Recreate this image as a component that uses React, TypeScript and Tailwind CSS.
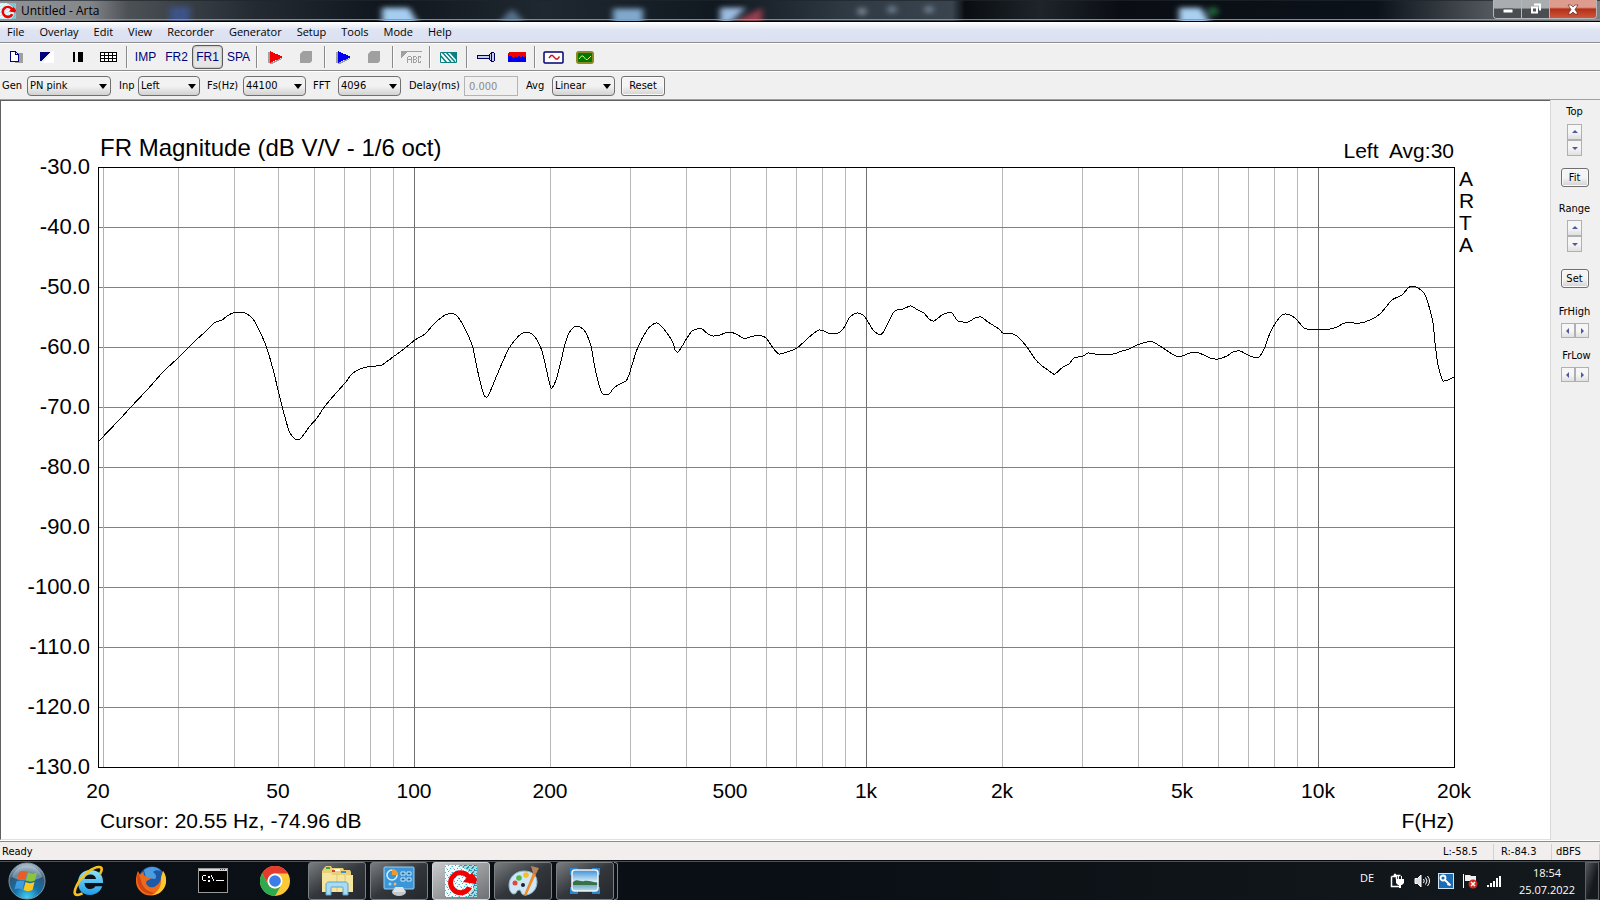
import type { ReactNode } from 'react';
import clsx from 'clsx';

const MENU = ['File', 'Overlay', 'Edit', 'View', 'Recorder', 'Generator', 'Setup', 'Tools', 'Mode', 'Help'];

// Plot frame in chart units: 20 Hz - 20 kHz, -30 dB - -130 dB
const LEFT = 98;
const RIGHT = 1454;
const TOP = 167;
const BOTTOM = 767;

const freqToX = (f: number) => Math.round(LEFT + (Math.log10(f / 20) / 3) * (RIGHT - LEFT));
const dbToY = (db: number) => Math.round(TOP + ((-30 - db) / 100) * (BOTTOM - TOP));

const DB_TICKS = [-30, -40, -50, -60, -70, -80, -90, -100, -110, -120, -130];
const MINOR_FREQS = [30, 40, 50, 60, 70, 80, 90, 200, 300, 400, 500, 600, 700, 800, 900, 2000, 3000, 4000, 5000, 6000, 7000, 8000, 9000];
const MAJOR_FREQS = [100, 1000, 10000];
const FREQ_LABELS: [number, string][] = [
    [20, '20'], [50, '50'], [100, '100'], [200, '200'], [500, '500'],
    [1000, '1k'], [2000, '2k'], [5000, '5k'], [10000, '10k'], [20000, '20k'],
];

const CURVE = `98,442 120,419 130,408 147,390 163,372 178,358 195,341 205,332 214,323 222,320 227,316 233,313 241,312 245,313
250,316 255,322 260,332 265,343 269,355 274,373 278,390 283,410 289,431 293,437 297,440 301,438 310,426 317,418 325,406
337,392 345,383 352,374 360,369 367,367 376,366 382,365 393,357 405,348 415,340 425,334 433,325 442,317 448,314 454,314
458,317 463,325 468,335 473,348 477,368 481,385 484,395 487,397 490,392 497,375 508,350 515,340 521,334 527,332 532,334
537,340 542,351 547,372 551,388 556,380 562,357 564,348 568,335 573,328 577,326 583,329 587,335 591,346 594,363 597,377
600,388 603,394 609,394 613,389 618,385 626,381 629,375 632,365 638,347 647,330 652,325 656,323 659,324 667,333 673,343
675,350 678,352 681,348 687,338 692,331 697,329 702,329 708,334 713,336 720,335 725,333 730,332 736,334 743,338 747,338
754,336 762,336 767,339 773,348 779,354 787,352 797,348 807,339 814,333 819,330 824,331 828,333 833,334 840,332 845,326
849,318 854,314 858,313 863,315 867,320 873,330 880,335 884,331 888,323 893,313 897,310 903,309 910,306 913,307 918,310
924,313 929,319 934,321 942,315 947,313 952,313 958,321 968,322 975,318 981,317 988,322 999,329 1003,333 1013,334 1018,337
1027,347 1035,359 1042,366 1048,370 1052,373 1055,374 1063,367 1069,364 1074,358 1083,356 1088,353 1095,354 1113,354
1122,351 1129,349 1137,345 1147,342 1153,342 1163,348 1172,354 1179,357 1190,353 1199,353 1210,358 1218,359 1227,356
1233,352 1240,351 1248,355 1256,358 1260,356 1265,347 1268,338 1273,327 1280,317 1285,314 1292,316 1297,320 1302,326
1307,329 1330,329 1337,327 1345,323 1360,323 1370,320 1380,314 1392,300 1402,295 1408,288 1413,286 1418,288 1424,293
1428,303 1433,323 1435,343 1438,365 1442,379 1443,381 1448,380 1454,377`;

// Catmull-Rom through the measured points
function smoothPath(points: string) {
    const pts = points.split(/\s+/).map((p) => p.split(',').map(Number));
    let d = `M${pts[0][0]} ${pts[0][1]}`;
    for (let i = 0; i < pts.length - 1; i++) {
        const p0 = pts[i - 1] ?? pts[i];
        const p1 = pts[i];
        const p2 = pts[i + 1];
        const p3 = pts[i + 2] ?? p2;
        const c1 = [p1[0] + (p2[0] - p0[0]) / 8, p1[1] + (p2[1] - p0[1]) / 8];
        const c2 = [p2[0] - (p3[0] - p1[0]) / 8, p2[1] - (p3[1] - p1[1]) / 8];
        d += `C${c1[0]} ${c1[1]} ${c2[0]} ${c2[1]} ${p2[0]} ${p2[1]}`;
    }
    return d;
}

function ArtaIcon({ className }: { className?: string }) {
    return (
        <svg viewBox="0 0 32 32" className={className} aria-hidden="true">
            <defs>
                <pattern id="artaNoise" width="7" height="6" patternUnits="userSpaceOnUse">
                    <path d="M0 1h1v1H0zM3 0h1v1H3zM5 3h1v1H5zM2 4h1v1H2z" fill="#2fb6cc" />
                    <path d="M6 1h1v1H6zM1 3h1v1H1zM4 5h1v1H4z" fill="#8fdbe6" />
                </pattern>
                <pattern id="artaDense" width="5" height="5" patternUnits="userSpaceOnUse">
                    <path d="M0 0h2v1H0zM3 1h1v2H3zM1 3h2v1H1zM4 4h1v1H4z" fill="#1fa5bb" />
                    <path d="M2 2h1v1H2zM4 0h1v1H4z" fill="#4b6c78" />
                </pattern>
            </defs>
            <rect width="32" height="32" fill="#f4fbfc" />
            <rect width="32" height="32" fill="url(#artaNoise)" />
            <path d="M14 0h18v32H22l6-8V10L20 4z" fill="#a5dce4" />
            <path d="M14 0h18v32H22l6-8V10L20 4z" fill="url(#artaDense)" />
            <path d="M25 9.500A12.500 12.500 0 1 0 27 23l-5-1.500A7.500 7.500 0 1 1 21.500 13L18 17l13 2 1-5-5-6z" fill="#f00000" />
        </svg>
    );
}

function TitleBar() {
    return (
        <header className="relative flex h-[22px] items-center justify-between overflow-hidden border-b border-black bg-[#0c1118]">
            {/* blurred desktop showing through the glass */}
            <svg className="absolute inset-0 h-full w-full" viewBox="0 0 1600 22" preserveAspectRatio="none" aria-hidden="true">
                <defs>
                    <linearGradient id="glass">
                        <stop offset="0" stopColor="#909396" />
                        <stop offset="0.055" stopColor="#85888b" />
                        <stop offset="0.08" stopColor="#4c5156" />
                        <stop offset="0.16" stopColor="#232a32" />
                        <stop offset="0.24" stopColor="#10161d" />
                        <stop offset="0.34" stopColor="#1f2830" />
                        <stop offset="0.45" stopColor="#101820" />
                        <stop offset="0.53" stopColor="#303a44" />
                        <stop offset="0.595" stopColor="#3a444e" />
                        <stop offset="0.603" stopColor="#0a0e12" />
                        <stop offset="0.65" stopColor="#1e242a" />
                        <stop offset="0.7" stopColor="#0a0e14" />
                        <stop offset="0.86" stopColor="#0c121a" />
                        <stop offset="0.93" stopColor="#50565b" />
                        <stop offset="1" stopColor="#7d8184" />
                    </linearGradient>
                    <filter id="soft" x="-50%" y="-50%" width="200%" height="200%"><feGaussianBlur stdDeviation="3" /></filter>
                </defs>
                <rect width="1600" height="22" fill="url(#glass)" />
                <g filter="url(#soft)">
                    <rect x="170" y="7" width="20" height="20" fill="#3c5287" />
                    <path d="M382 8h27l10 18h-37z" fill="#a4cdf0" />
                    <path d="M512 9l14 16h-28z" fill="#56718a" />
                    <rect x="613" y="9" width="30" height="18" fill="#7fa8cc" />
                    <path d="M720 8h26l-18 18h-8z" fill="#9dbbe0" />
                    <path d="M736 22l26-14v18h-26z" fill="#99404f" />
                    <circle cx="862" cy="12" r="4" fill="#87909b" />
                    <circle cx="892" cy="10" r="4" fill="#76889a" />
                    <circle cx="929" cy="10" r="4" fill="#76889a" />
                    <path d="M1179 8h22l10 18h-32z" fill="#a9d0f2" />
                    <circle cx="1213" cy="12" r="5" fill="#22693a" />
                </g>
                <rect width="1600" height="1" fill="#20262c" opacity="0.7" />
                <rect y="20" width="1600" height="1" fill="#8f9599" />
            </svg>
            <div className="relative flex items-center gap-[5px]">
                <ArtaIcon className="size-4" />
                <h1 className="text-xs leading-4 text-black">Untitled - Arta</h1>
            </div>
            <div className="relative mr-[3px] flex h-[19px] self-start overflow-hidden rounded-b border border-t-0 border-[#b5b8ba]">
                <button aria-label="Minimize" className="flex w-7 items-center justify-center border-r border-[#b5b8ba] bg-linear-to-b from-[#aaadaf] from-45% to-[#4a4e52] to-50%">
                    <svg width="12" height="12" viewBox="0 0 12 12"><path d="M1 6h10v4H1z" fill="#fff" stroke="#484c50" /></svg>
                </button>
                <button aria-label="Restore" className="flex w-7 items-center justify-center border-r border-[#b5b8ba] bg-linear-to-b from-[#aaadaf] from-45% to-[#4a4e52] to-50%">
                    <svg width="13" height="12" viewBox="0 0 13 12"><path d="M5 1.500h6v6" fill="none" stroke="#fff" strokeWidth="2" /><path d="M3 4.500h5v5H3z" fill="#555" stroke="#fff" strokeWidth="2" /></svg>
                </button>
                <button aria-label="Close" className="flex w-[46px] items-center justify-center bg-linear-to-b from-[#dd9c8e] from-40% via-[#b32f17] via-50% to-[#d0553a]">
                    <svg width="12" height="11" viewBox="0 0 12 11"><path d="M1 1h3l2 2 2-2h3L8 5.500 11 10H8L6 8l-2 2H1l3-4.500z" fill="#fff" stroke="#5c2c26" strokeWidth="0.700" /></svg>
                </button>
            </div>
        </header>
    );
}

function ToolButton({ label, active, children }: { label: string; active?: boolean; children: ReactNode }) {
    return (
        <button
            aria-label={label}
            className={clsx(
                'flex h-6 w-[31px] items-center justify-center font-["Liberation_Sans",sans-serif] text-xs text-[#000078]',
                active && 'rounded-sm border border-[#5a5a5a] bg-[#e6e6e6] shadow-[inset_0_0_2px_#888]',
            )}
        >
            {children}
        </button>
    );
}

function ToolSep() {
    return <div className="mx-[2px] h-[22px] w-[2px] border-l border-[#8a8a8a] bg-[#fafafa]" />;
}

function PlayIcon({ className }: { className: string }) {
    return (
        <svg width="15" height="13" viewBox="0 0 15 13" className={className} shapeRendering="crispEdges">
            <path d="M0 1h2v11H0z" fill="#a0a0a0" />
            <path d="M2 0l13 6-13 6z" fill="currentColor" />
            <path d="M2 12l12-5v1L4 13H2z" fill="#a0a0a0" />
        </svg>
    );
}

function StopIcon() {
    return (
        <svg width="13" height="12" viewBox="0 0 13 12"><path d="M3 0h9v10l-2 2H0V3z" fill="#a0a0a0" /></svg>
    );
}

function ToolBar() {
    return (
        <div role="toolbar" aria-label="Main" className="flex h-7 items-center border-t border-[#8e8e8e] bg-[#f0f0f0] pt-px shadow-[inset_0_1px_#fff]">
            <ToolButton label="New">
                <svg width="16" height="14" viewBox="0 0 16 14" className="ml-[3px]" shapeRendering="crispEdges">
                    <path d="M6 3h8v10H6z" fill="#a0a0a0" />
                    <path d="M1.500 1.500h5l3 3v7h-8z" fill="#fff" stroke="#000078" />
                    <path d="M6.500 1.500v3h3" fill="none" stroke="#000078" />
                </svg>
            </ToolButton>
            <ToolButton label="Invert colors">
                <svg width="14" height="12" viewBox="0 0 14 12" shapeRendering="crispEdges">
                    <path d="M12 0h2v12H3z" fill="#fff" />
                    <path d="M0 1h10L1 10H0z" fill="#000078" />
                </svg>
            </ToolButton>
            <ToolButton label="Line width">
                <svg width="10" height="10" viewBox="0 0 10 10" shapeRendering="crispEdges"><path d="M0 0h2v10H0zM5 0h5v10H5z" fill="#000" /></svg>
            </ToolButton>
            <ToolButton label="Grid">
                <svg width="17" height="10" viewBox="0 0 17 10" shapeRendering="crispEdges">
                    <path d="M0 0h17v10H0z" fill="#fff" />
                    <path d="M0.500 0.500h16v9h-16zM0 3.500h17M0 6.500h17M4.500 0v10M8.500 0v10M12.500 0v10" fill="none" stroke="#000" />
                </svg>
            </ToolButton>
            <ToolSep />
            <ToolButton label="IMP">IMP</ToolButton>
            <ToolButton label="FR2">FR2</ToolButton>
            <ToolButton label="FR1" active>FR1</ToolButton>
            <ToolButton label="SPA">SPA</ToolButton>
            <ToolSep />
            <ToolButton label="Record"><PlayIcon className="text-[#f00000]" /></ToolButton>
            <ToolButton label="Stop recording"><StopIcon /></ToolButton>
            <ToolSep />
            <ToolButton label="Generate"><PlayIcon className="text-[#0000f0]" /></ToolButton>
            <ToolButton label="Stop generator"><StopIcon /></ToolButton>
            <ToolSep />
            <ToolButton label="Overlay text">
                <svg width="21" height="12" viewBox="0 0 21 12" fill="none" stroke="#a0a0a0" shapeRendering="crispEdges">
                    <path d="M0 0h7L0 7z" fill="#a0a0a0" stroke="none" />
                    <path d="M0 0.500h21M6.500 12V6.500l1-1h2l1 1V12M6.500 8.500h4M12.500 5.500h2l1 1v1l-1 1h-2zM12.500 8.500v3h2l1-1v-1l-1-1M20 6.500l-1-1h-1l-1 1v4l1 1h1l1-1" />
                </svg>
            </ToolButton>
            <ToolSep />
            <ToolButton label="Smoothing">
                <svg width="17" height="11" viewBox="0 0 17 11" fill="none" stroke="#0a8080">
                    <path d="M0.500 0.500h16v10h-16z" fill="#fff" />
                    <path d="M0 3l7 8M2 0l9 10M6 0l9 10" strokeWidth="1.500" />
                    <path d="M9 0h8v9z" fill="#0a8080" stroke="none" />
                </svg>
            </ToolButton>
            <ToolSep />
            <ToolButton label="Microphone">
                <svg width="18" height="10" viewBox="0 0 18 10" stroke="#000060" fill="#c8cce8" shapeRendering="crispEdges">
                    <path d="M0.500 3.500h12v3h-12z" />
                    <path d="M12.500 2.500l1-1h1v7h-1l-1-1zM14.500 0.500h2l1 1v7l-1 1h-2z" />
                </svg>
            </ToolButton>
            <ToolButton label="Spectrum colors">
                <svg width="18" height="10" viewBox="0 0 18 10" shapeRendering="crispEdges">
                    <path d="M1 0h16l1 1v7H0V1z" fill="#f00000" />
                    <path d="M0 3l2 2 1-2 2 3 2-2 2 2 2-3 2 3 1-2 2 1 2-2v7H0z" fill="#0000f0" />
                </svg>
            </ToolButton>
            <ToolSep />
            <ToolButton label="Signal generator setup">
                <svg width="21" height="13" viewBox="0 0 21 13" fill="none">
                    <rect x="1" y="1" width="19" height="11" rx="1" fill="#fff" stroke="#000070" strokeWidth="1.500" />
                    <path d="M6 7l2-2.500h1.500L13 8h1.500l2-2.500" stroke="#d01010" strokeWidth="1.300" />
                </svg>
            </ToolButton>
            <ToolButton label="Audio devices">
                <svg width="18" height="13" viewBox="0 0 18 13" fill="none">
                    <rect x="1" y="1" width="16" height="11" rx="2" fill="#007800" stroke="#8a8a20" strokeWidth="2" />
                    <path d="M3 8l2.500-3H7l3 3.500h1.500L15 5" stroke="#f0f060" />
                </svg>
            </ToolButton>
        </div>
    );
}

interface ComboProps {
    id: string;
    label: string;
    options: string[];
    labelClass: string;
    width: string;
}

function Combo({ id, label, options, labelClass, width }: ComboProps) {
    return (
        <>
            <label htmlFor={id} className={labelClass}>{label}</label>
            <div className={clsx('relative', width)}>
                <select id={id} className="h-5 w-full appearance-none rounded-sm border border-[#707070] bg-linear-to-b from-[#f2f2f2] from-50% to-[#d2d2d2] pl-[2px] text-[11px] leading-4">
                    {options.map((o) => <option key={o}>{o}</option>)}
                </select>
                <svg width="8" height="5" viewBox="0 0 8 5" className="pointer-events-none absolute top-2 right-1"><path d="M0 0h8L4 5z" fill="#000" /></svg>
            </div>
        </>
    );
}

const pushButton = 'rounded-[3px] border border-[#707070] bg-linear-to-b from-[#f4f4f4] from-50% to-[#d2d2d2] text-[11px] leading-4 shadow-[inset_0_0_0_1px_#fafafa]';

function SettingsBar() {
    return (
        <div className="flex h-[29px] items-center border-t border-[#8e8e8e] bg-[#f0f0f0] pt-[2px] pl-[2px] text-[11px] shadow-[inset_0_1px_#fff]">
            <Combo id="gen" label="Gen" options={['PN pink', 'PN white', 'Periodic']} labelClass="w-[25px]" width="w-[84px]" />
            <Combo id="inp" label="Inp" options={['Left', 'Right']} labelClass="ml-2 w-[19px]" width="w-[62px]" />
            <Combo id="fs" label="Fs(Hz)" options={['44100', '48000', '96000']} labelClass="ml-[7px] w-9" width="w-[63px]" />
            <Combo id="fft" label="FFT" options={['4096', '8192', '16384']} labelClass="ml-[7px] w-[25px]" width="w-[63px]" />
            <label htmlFor="delay" className="ml-2 w-[55px]">Delay(ms)</label>
            <input id="delay" disabled defaultValue="0.000" className="h-5 w-[54px] border border-[#b4b4b4] bg-[#f0f0f0] px-1 text-[11px] text-[#8a8a8a]" />
            <Combo id="avg" label="Avg" options={['Linear', 'Exp', 'None']} labelClass="ml-2 w-[26px]" width="w-[63px]" />
            <button className={clsx(pushButton, 'ml-[6px] h-5 w-11')}>Reset</button>
        </div>
    );
}

function Chart() {
    return (
        <svg viewBox="1 101 1549 738" className="block h-auto w-full bg-white font-['Liberation_Sans',Arial,sans-serif]" role="img" aria-label="Frequency response">
            <g shapeRendering="crispEdges" fill="none">
                {MINOR_FREQS.map((f) => (
                    <path key={f} d={`M${freqToX(f) + 0.5} ${TOP}V${BOTTOM}`} stroke="#b8b8b8" />
                ))}
                {DB_TICKS.map((db) => (
                    <path key={db} d={`M${LEFT} ${dbToY(db) + 0.5}H${RIGHT}`} stroke="#808080" />
                ))}
                {MAJOR_FREQS.map((f) => (
                    <path key={f} d={`M${freqToX(f) + 0.5} ${TOP}V${BOTTOM}`} stroke="#707070" />
                ))}
                <path d={`M103.500 ${TOP}V${BOTTOM}`} stroke="#c4c41c" />
                <path d={`M${LEFT + 0.5} ${TOP + 0.5}H${RIGHT + 0.5}V${BOTTOM + 0.5}H${LEFT + 0.5}z`} stroke="#000" />
                <path d={smoothPath(CURVE)} stroke="#000" />
            </g>
            <g fontSize="21" fill="#000">
                <text x="100" y="156" fontSize="24">FR Magnitude (dB V/V - 1/6 oct)</text>
                <text x="1454" y="158" textAnchor="end">{'Left\u00a0 Avg:30'}</text>
                {DB_TICKS.map((db) => (
                    <text key={db} x="90" y={dbToY(db) + 7} fontSize="22" textAnchor="end">{db.toFixed(1)}</text>
                ))}
                {FREQ_LABELS.map(([f, text]) => (
                    <text key={f} x={freqToX(f)} y="798" textAnchor="middle">{text}</text>
                ))}
                {['A', 'R', 'T', 'A'].map((c, i) => (
                    <text key={i} x="1459" y={186 + i * 22}>{c}</text>
                ))}
                <text x="100" y="828">Cursor: 20.55 Hz, -74.96 dB</text>
                <text x="1454" y="828" textAnchor="end">F(Hz)</text>
            </g>
        </svg>
    );
}

const ARROWS = {
    up: 'M0 4h6L3 1z',
    down: 'M0 2h6L3 5z',
    left: 'M4 0v6L1 3z',
    right: 'M2 0v6l3-3z',
};

function Spinner({ label, dirs }: { label: string; dirs: (keyof typeof ARROWS)[] }) {
    return (
        <div className={clsx('flex', dirs[0] === 'up' ? 'flex-col' : 'flex-row')}>
            {dirs.map((dir) => (
                <button
                    key={dir}
                    aria-label={`${label} ${dir}`}
                    className={clsx(
                        'flex items-center justify-center border border-[#b0b0b0] bg-linear-to-b from-[#f6f6f6] from-50% to-[#e0e0e0]',
                        dirs[0] === 'up' ? 'h-4 w-[15px]' : 'h-[15px] w-[14px]',
                    )}
                >
                    <svg width="6" height="6" viewBox="0 0 6 6"><path d={ARROWS[dir]} fill="#5258a0" /></svg>
                </button>
            ))}
        </div>
    );
}

function SidePanel() {
    return (
        <aside className="flex w-[50px] shrink-0 flex-col items-center border-l border-[#d8d8d8] bg-[#f0f0f0] pt-1 pr-[2px] text-[11px] leading-4">
            <span>Top</span>
            <div className="mt-1"><Spinner label="Top" dirs={['up', 'down']} /></div>
            <button className={clsx(pushButton, 'mt-3 h-[19px] w-7')}>Fit</button>
            <span className="mt-[14px]">Range</span>
            <div className="mt-[3px]"><Spinner label="Range" dirs={['up', 'down']} /></div>
            <button className={clsx(pushButton, 'mt-[17px] h-[19px] w-7')}>Set</button>
            <span className="mt-4">FrHigh</span>
            <div className="mt-[3px]"><Spinner label="FrHigh" dirs={['left', 'right']} /></div>
            <span className="mt-[10px] pl-1">FrLow</span>
            <div className="mt-[3px]"><Spinner label="FrLow" dirs={['left', 'right']} /></div>
        </aside>
    );
}

function StatusBar() {
    return (
        <div className="flex h-5 items-center border-t border-white bg-[#f1eeed] pt-[2px] pl-[2px] text-[11px] leading-4 shadow-[inset_0_1px_#8a8a8a]">
            <span className="flex-1">Ready</span>
            <span className="w-[51px] border-r border-[#d4d0ce]">L:-58.5</span>
            <span className="w-[58px] border-r border-[#d4d0ce] pl-[7px]">R:-84.3</span>
            <span className="w-12 border-r border-[#d4d0ce] pl-1">dBFS</span>
        </div>
    );
}

function StartOrb() {
    return (
        <svg width="38" height="38" viewBox="0 0 38 38">
            <defs>
                <radialGradient id="orb" cx="0.5" cy="0.95" r="0.9">
                    <stop offset="0" stopColor="#3fd0f4" />
                    <stop offset="0.4" stopColor="#1670a8" />
                    <stop offset="0.75" stopColor="#2d5878" />
                    <stop offset="1" stopColor="#9fb4c2" />
                </radialGradient>
            </defs>
            <circle cx="19" cy="19" r="18" fill="url(#orb)" stroke="#7d97a6" />
            <path d="M4 15a15.500 15.500 0 0 1 30 0c-9 5-20 5-30 0z" fill="#fff" opacity="0.3" />
            <path d="M11 10c3-1.500 5-1.500 8 0l-2 8c-3-1.500-5-1.500-8 0z" fill="#ec5b25" />
            <path d="M20 10.500c3 1.500 6 1.500 9 0l-2 8c-3 1.500-6 1.500-9 0z" fill="#8cc43c" />
            <path d="M8.500 19.500c3-1.500 5-1.500 8 0l-2 8c-3-1.500-5-1.500-8 0z" fill="#3d9ce0" />
            <path d="M17.500 20c3 1.500 6 1.500 9 0l-2 8c-3 1.500-6 1.500-9 0z" fill="#fcc81e" />
        </svg>
    );
}

function ExplorerE() {
    return (
        <svg width="32" height="32" viewBox="0 0 32 32">
            <defs>
                <linearGradient id="ie" x2="0" y2="1"><stop stopColor="#8fe2fc" /><stop offset="1" stopColor="#1e9ce4" /></linearGradient>
            </defs>
            <path d="M30 18H11.500c.3 4 2.500 6 5.800 6 2.400 0 4-1 5-2.700h7C27.600 26.500 23 30 17 30 9.500 30 5 25 5 17.500S10 5 17.500 5C25.500 5 30.500 10 30 18zM23 14c-.4-3-2.400-4.500-5.500-4.500S12.200 11 11.500 14z" fill="url(#ie)" />
            <path d="M27 9c2.500-4.500 2.500-7-1-7C20 2 9 10 4 20c-3 6-3.500 10 .5 10 1.500 0 3-.6 5-1.600" fill="none" stroke="#f6c21c" strokeWidth="2.600" />
        </svg>
    );
}

function FirefoxIcon() {
    return (
        <svg width="32" height="32" viewBox="0 0 32 32">
            <circle cx="17" cy="15" r="13.500" fill="#1c5aa8" />
            <path d="M9 5c5-4 13-4 17 1-3-1-6-1-8 1 3 2 4 5 2 7l-9-1z" fill="#4c9ce0" />
            <path d="M28 6c3 4 4 12 1 17-5 9-18 10-24 3C0 21 0 13 3 6l2 4c1-2 3-3 4-3-1 2 0 4 2 4.500l5 1.500c-1 2-4 2-5 4 0 4 4 6 8 5 4-2 7-5 7-10z" fill="#ec6a18" />
            <path d="M28 6c4 5 4 13 1 17-3 5-8 7-12 7 6-3 10-9 9-17z" fill="#fcc82c" />
            <path d="M3 8c-2 7 0 14 5 18 4 3 8 4 12 2-8-1-13-6-14-13z" fill="#d24414" />
        </svg>
    );
}

function CmdIcon() {
    return (
        <svg width="30" height="26" viewBox="0 0 30 26" shapeRendering="crispEdges" fill="none">
            <path d="M0.500 0.500h29v24h-29z" fill="#000" stroke="#9a9a9a" />
            <path d="M1 1h28v2H1z" fill="#d8d8d8" />
            <path d="M22 1h1v1h-1zM24 1h1v1h-1zM26 1h1v1h-1z" fill="#444" />
            <path d="M8 7.500H5.500l-1 1v3l1 1H8M10 8h1v1h-1zM10 12h1v1h-1zM13 7l3 6M18 12.500h8" stroke="#fff" />
        </svg>
    );
}

function ChromeIcon() {
    return (
        <svg width="30" height="30" viewBox="0 0 30 30">
            <circle cx="15" cy="15" r="15" fill="#fcc934" />
            <path d="M2 7.500A15 15 0 0 1 28 7.500H15a7.500 7.500 0 0 0-6.500 11.200z" fill="#e33b2e" />
            <path d="M2 7.500a15 15 0 0 0 13 22.500l6.500-11.300a7.500 7.500 0 0 1-13 0z" fill="#2da94f" />
            <circle cx="15" cy="15" r="7.500" fill="#fff" />
            <circle cx="15" cy="15" r="5.800" fill="#3b7de8" />
        </svg>
    );
}

function FolderIcon() {
    return (
        <svg width="32" height="32" viewBox="0 0 32 32">
            <path d="M3 3l2-2h5l1 2h11l1 2h6l1 2v20H1V6z" fill="#e8cf78" />
            <path d="M5 2h4v2H5z" fill="#2fa84c" />
            <path d="M13 4h6v2h-6z" fill="#fff" />
            <path d="M20 6h5v2h-5z" fill="#3a8fd8" />
            <path d="M11 5h3v2h-3z" fill="#d84030" />
            <path d="M1 8h9l1 2h21v17H1z" fill="#f6e59c" />
            <path d="M16 9v18M24 10v17" stroke="#dcc67c" fill="none" />
            <path d="M5 30V20c0-2 1-3 3-3h16c2 0 3 1 3 3v10h-5v-7c0-1 0-1-1-1H11c-1 0-1 0-1 1v7z" fill="#a9dcf4" stroke="#5ca4cc" />
        </svg>
    );
}

function ControlPanelIcon() {
    return (
        <svg width="32" height="32" viewBox="0 0 32 32" fill="none">
            <rect x="1" y="2" width="30" height="22" rx="1" fill="#3a96d8" stroke="#9ad0f0" />
            <circle cx="9" cy="10" r="5" stroke="#d4effc" strokeWidth="1.500" />
            <path d="M9 10V4a6 6 0 0 1 6 6z" fill="#f09828" />
            <path d="M18 7h4v3h-4zM24 7h4v3h-4zM18 13h4v3h-4zM24 13h4v3h-4z" fill="#1c68a8" stroke="#c8ecfc" />
            <circle cx="7" cy="19" r="1.500" fill="#9adcf8" />
            <circle cx="12" cy="19" r="1.500" fill="#f8b060" />
            <ellipse cx="16" cy="27" rx="7" ry="4" fill="#c4c8cc" />
            <path d="M12 22h8l2 5H10z" fill="#dfe2e4" />
        </svg>
    );
}

function PaintIcon() {
    return (
        <svg width="32" height="32" viewBox="0 0 32 32">
            <path d="M2 20C2 12 9 6 17 6s13 4 13 11-5 13-12 13c-5 0-3-5-6-5s-2 4-5 4-5-4-5-9z" fill="#cfe6f6" stroke="#8bb4d0" />
            <circle cx="8" cy="18" r="2.500" fill="#e04838" />
            <circle cx="12" cy="13" r="2.800" fill="#52b848" />
            <circle cx="19" cy="10" r="2.800" fill="#f4c028" />
            <circle cx="16" cy="20" r="2" fill="#16242e" />
            <path d="M26 8l3 1-10 22-2-1z" fill="#f08c28" />
            <path d="M24 1l8 2-3 6-3-1z" fill="#b88458" />
        </svg>
    );
}

function PhotoIcon() {
    return (
        <svg width="32" height="28" viewBox="0 0 32 28">
            <defs>
                <linearGradient id="sky" x2="0" y2="1"><stop stopColor="#3d8fd4" /><stop offset="0.55" stopColor="#d4ecf8" /><stop offset="0.6" stopColor="#5c9cb8" /><stop offset="1" stopColor="#b8dcec" /></linearGradient>
            </defs>
            <path d="M1 1h8v7H1zM23 1h8v7h-8zM1 20h8v7H1zM23 20h8v7h-8z" fill="#2d84d0" />
            <rect x="3" y="3" width="26" height="21" rx="3" fill="url(#sky)" stroke="#f0f4f6" strokeWidth="1.500" />
            <path d="M4 15c4-4 7 0 11-1s9 1 13 2v2H4z" fill="#3a7048" />
        </svg>
    );
}

function TaskButton({ label, active, children }: { label: string; active?: boolean; children: ReactNode }) {
    return (
        <button
            aria-label={label}
            className={clsx(
                'flex h-[38px] w-[58px] items-center justify-center rounded-[3px] border bg-linear-to-br',
                active ? 'border-[#d0d3d5] from-[#c8cacb] to-[#6d7072]' : 'border-[#7c8083] from-[#7a7d80] via-[#33373b] to-[#24282c]',
            )}
        >
            {children}
        </button>
    );
}

function TaskBar() {
    const pinned: [string, ReactNode][] = [
        ['Internet Explorer', <ExplorerE />],
        ['Firefox', <FirefoxIcon />],
        ['Command Prompt', <CmdIcon />],
        ['Chrome', <ChromeIcon />],
    ];
    return (
        <footer className="flex h-10 items-center border-t border-[#0a0c0e] bg-linear-to-r from-[#0c1117] via-[#0a0f15] to-[#14191d] font-['Open_Sans',sans-serif] text-white shadow-[inset_0_1px_#4c5256]">
            <button aria-label="Start" className="mr-1 flex w-[54px] justify-center"><StartOrb /></button>
            {pinned.map(([name, icon]) => (
                <button key={name} aria-label={name} className="flex w-[62px] justify-center">{icon}</button>
            ))}
            <div className="ml-[2px] flex items-center gap-1">
                <TaskButton label="Windows Explorer"><FolderIcon /></TaskButton>
                <TaskButton label="Control Panel"><ControlPanelIcon /></TaskButton>
                <TaskButton label="Arta" active><ArtaIcon className="size-8" /></TaskButton>
                <TaskButton label="Paint"><PaintIcon /></TaskButton>
                <div className="flex">
                    <TaskButton label="Photo Viewer"><PhotoIcon /></TaskButton>
                    <div className="h-[38px] w-1 rounded-r-[3px] border border-l-0 border-[#7c8083]" />
                </div>
            </div>
            <div className="ml-auto flex items-center">
                <span className="mb-1 w-[30px] text-[11px]">DE</span>
                <div className="flex items-center gap-2">
                    <svg width="16" height="16" viewBox="0 0 16 16" fill="none" stroke="#fff">
                        <path d="M3.500 2.500h7M1.500 3.500h5v3M1.500 3.500v10h8M4 1.500h2" strokeWidth="1.500" />
                        <path d="M6 6h8v4l-2 2H8l-2-2zM8 3h1v3H8zM11 3h1v3h-1zM9 12h2v3H9z" fill="#fff" stroke="none" />
                    </svg>
                    <svg width="16" height="16" viewBox="0 0 16 16" fill="none" stroke="#fff">
                        <path d="M1 5.500h2.500L7 2v12l-3.500-3.500H1z" fill="#ddd" />
                        <path d="M9.500 6q1.500 2 0 4M11.500 4.500q3 3.500 0 7M13.500 3q4 5 0 10" />
                    </svg>
                    <svg width="16" height="16" viewBox="0 0 16 16">
                        <rect x="0.500" y="0.500" width="15" height="15" fill="#1c6cb4" stroke="#cfe4f4" />
                        <circle cx="5" cy="5" r="2.500" fill="none" stroke="#fff" strokeWidth="1.800" />
                        <path d="M6.500 6.500l6 6M9.500 12l1.500-1.500" stroke="#fff" strokeWidth="1.800" />
                    </svg>
                    <svg width="16" height="16" viewBox="0 0 16 16">
                        <path d="M1.500 1v14" stroke="#fff" />
                        <path d="M3 2h5l1 1h5v6H9L8 8H3z" fill="#f0f0f0" />
                        <circle cx="11" cy="11" r="4.500" fill="#d42820" />
                        <path d="M9 9l4 4M13 9l-4 4" stroke="#fff" strokeWidth="1.500" />
                    </svg>
                    <svg width="16" height="16" viewBox="0 0 16 16" shapeRendering="crispEdges">
                        <path d="M1 12h2v2H1zM4 10h2v4H4zM7 8h2v6H7zM10 5h2v9h-2zM13 3h2v11h-2z" fill="#fff" />
                    </svg>
                </div>
                <div className="ml-3 w-[66px] text-center text-[11px] leading-[17px]">
                    <div>18:54</div>
                    <div>25.07.2022</div>
                </div>
                <button aria-label="Show desktop" className="ml-[5px] mr-px h-[38px] w-[14px] border border-[#5c6266] bg-linear-to-br from-[#55595c] to-[#16191c] to-60%" />
            </div>
        </footer>
    );
}

export default function App() {
    return (
        <div className="flex min-h-screen flex-col bg-[#f0f0f0] font-['DejaVu_Sans_Condensed','DejaVu_Sans',sans-serif] text-black">
            <div className="font-['Open_Sans',sans-serif]">
                <TitleBar />
                <nav className="flex h-5 items-center gap-px bg-linear-to-b from-white via-[#dfe4f2] via-40% to-[#dbe1f2]">
                    {MENU.map((item) => (
                        <button key={item} className="px-[7px] text-[11px] leading-4">{item}</button>
                    ))}
                </nav>
            </div>
            <ToolBar />
            <SettingsBar />
            <main className="flex flex-1 border-t border-[#a0a0a0]">
                <section className="min-w-0 flex-1 border-t border-b border-l border-t-[#606060] border-b-[#e0e0e0] border-l-[#606060] bg-white">
                    <Chart />
                </section>
                <SidePanel />
            </main>
            <StatusBar />
            <TaskBar />
        </div>
    );
}
